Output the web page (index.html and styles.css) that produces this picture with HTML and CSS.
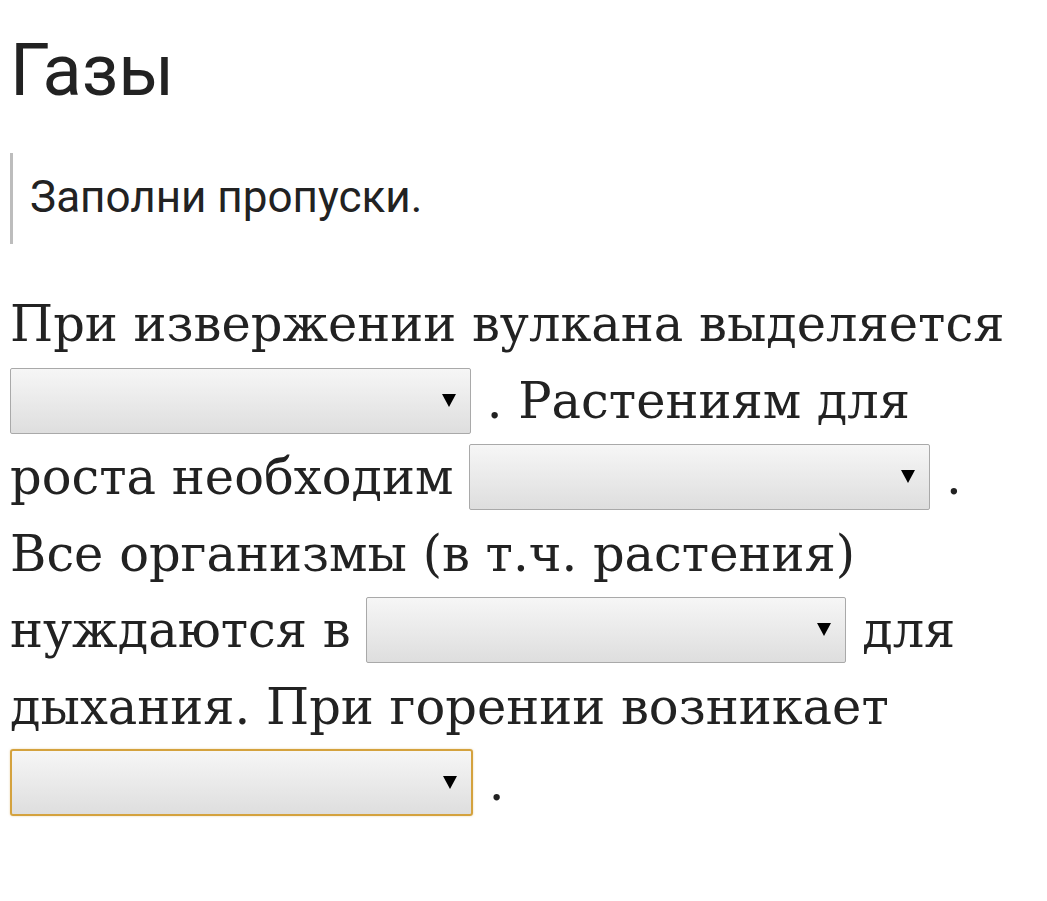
FILE: index.html
```html
<!DOCTYPE html>
<html lang="ru">
<head>
<meta charset="utf-8">
<title>Газы</title>
<link rel="stylesheet" href="styles.css">
</head>
<body>
<main class="page">
  <h1 class="title">Газы</h1>
  <blockquote class="note">Заполни пропуски.</blockquote>
  <p class="task">При извержении вулкана выделяется <span class="select" role="combobox"></span> . Растениям для роста необходим <span class="select" role="combobox"></span> . Все организмы (в т.ч. растения) нуждаются в <span class="select select--wide" role="combobox"></span> для дыхания. При горении возникает <span class="select select--focus" role="combobox"></span> .</p>
</main>
</body>
</html>
```
FILE: styles.css
```css
html, body {
  margin: 0;
  padding: 0;
  background: #fff;
}

.page {
  padding: 0 10px;
  color: #222;
}

.title {
  font-family: Roboto, "Noto Sans", sans-serif;
  font-weight: 400;
  font-size: 72px;
  line-height: 1;
  margin: 0;
  padding-top: 35px;
  color: #222;
}

.note {
  margin: 46px 0 0 0;
  border-left: 3px solid #bdbdbd;
  padding: 20px 0 22px 17px;
  font-family: Roboto, "Noto Sans", sans-serif;
  font-size: 44px;
  line-height: 49px;
  color: #222;
}

.task {
  margin: 42px 0 0 0;
  font-family: "DejaVu Serif", serif;
  font-size: 49.5px;
  line-height: 76.5px;
  color: #222;
}

.select {
  display: inline-block;
  position: relative;
  width: 461px;
  height: 66px;
  box-sizing: border-box;
  vertical-align: -16px;
  border: 1px solid #a9a9a9;
  border-radius: 2px;
  background: linear-gradient(#f6f6f6, #dedede);
}

.select::after {
  content: "";
  position: absolute;
  right: 14px;
  top: 25px;
  width: 0;
  height: 0;
  border-left: 7px solid transparent;
  border-right: 7px solid transparent;
  border-top: 13px solid #000;
}

.select--wide {
  width: 480px;
}

.select--focus {
  width: 463px;
  height: 67px;
  border: 2px solid #d4a23e;
  border-radius: 3px;
  box-shadow: 0 0 2px rgba(212, 162, 62, 0.5);
}
```
